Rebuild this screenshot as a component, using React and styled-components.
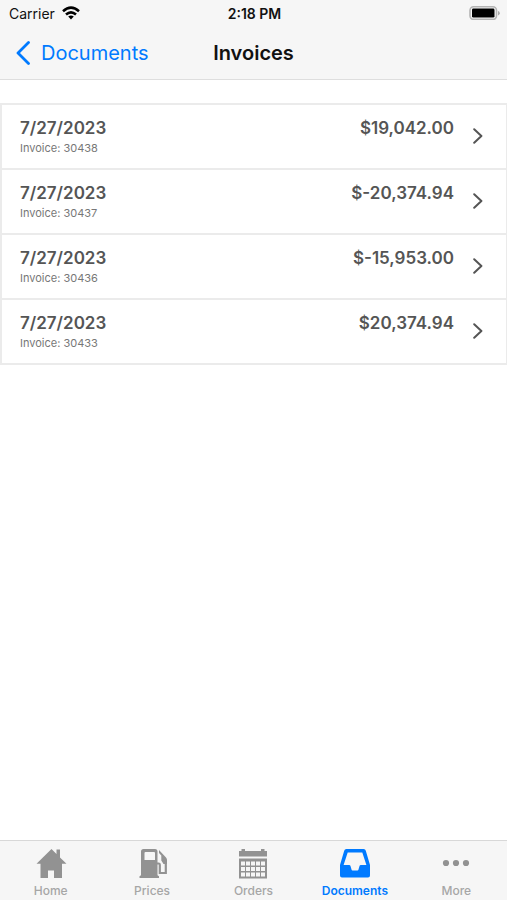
import styled, { createGlobalStyle } from 'styled-components';

const invoices = [
  { number: '30438', date: '7/27/2023', total: '$19,042.00' },
  { number: '30437', date: '7/27/2023', total: '$-20,374.94' },
  { number: '30436', date: '7/27/2023', total: '$-15,953.00' },
  { number: '30433', date: '7/27/2023', total: '$20,374.94' },
];

const tabs = [
  { label: 'Home', Icon: HomeIcon },
  { label: 'Prices', Icon: PumpIcon },
  { label: 'Orders', Icon: CalendarIcon },
  { label: 'Documents', Icon: InboxIcon, active: true },
  { label: 'More', Icon: MoreIcon },
];

function App() {
  return (
    <Screen>
      <GlobalStyle />
      <Header>
        <StatusBar>
          <Carrier>
            Carrier
            <WifiIcon />
          </Carrier>
          <Clock>2:18 PM</Clock>
          <BatterySlot>
            <BatteryIcon />
          </BatterySlot>
        </StatusBar>
        <NavBar>
          <BackButton type="button">
            <BackIcon />
            Documents
          </BackButton>
          <Title>Invoices</Title>
        </NavBar>
      </Header>
      <Content>
        <InvoiceList>
          {invoices.map((invoice) => (
            <li key={invoice.number}>
              <InvoiceRow href={`#${invoice.number}`}>
                <InvoiceInfo>
                  <Amount>{invoice.date}</Amount>
                  <InvoiceNumber>Invoice: {invoice.number}</InvoiceNumber>
                </InvoiceInfo>
                <Amount>{invoice.total}</Amount>
                <Chevron />
              </InvoiceRow>
            </li>
          ))}
        </InvoiceList>
      </Content>
      <TabBar>
        {tabs.map(({ label, Icon, active }) => (
          <Tab key={label} href={`#${label.toLowerCase()}`} $active={active}>
            <Icon />
            <TabLabel $active={active}>{label}</TabLabel>
          </Tab>
        ))}
      </TabBar>
    </Screen>
  );
}

function WifiIcon() {
  return (
    <svg width="18" height="14" viewBox="0 0 18 14" fill="none" stroke="#000" strokeWidth="2.6">
      <path d="M1 5.2Q9-1.8 17 5.2" />
      <path d="M4 8.6Q9 4.2 14 8.6" />
      <path d="M6.2 10.5Q9 8.5 11.8 10.5L9 13.6z" fill="#000" stroke="none" />
    </svg>
  );
}

function BatteryIcon() {
  return (
    <svg width="31" height="14" viewBox="0 0 31 14">
      <rect x="1" y="0.8" width="26.5" height="12.6" rx="3.6" fill="#f6f6f6" stroke="#b4b4b4" strokeWidth="1.6" />
      <rect x="3" y="2.6" width="22.5" height="9" rx="1.4" fill="#000" />
      <path d="M29 5v4.4q1.8-.6 1.8-2.2T29 5z" fill="#aaa" />
    </svg>
  );
}

function BackIcon() {
  return (
    <svg width="14" height="24" viewBox="0 0 14 24" fill="none" stroke="#007aff" strokeWidth="2.8">
      <path d="M12.5 1.5L2 12l10.5 10.5" strokeLinecap="round" strokeLinejoin="round" />
    </svg>
  );
}

function Chevron() {
  return (
    <svg width="10" height="16" viewBox="0 0 10 16" fill="none" stroke="#555" strokeWidth="2">
      <path d="M1.2 1.2L8.4 8l-7.2 6.8" strokeLinecap="round" strokeLinejoin="round" />
    </svg>
  );
}

function HomeIcon() {
  return (
    <svg width="32" height="32" viewBox="0 0 32 32" fill="currentColor">
      <path d="M16.5 1L1.5 15.8H5.5V30H13V22.5H19V30H27V15.8H31.5L25 9.5V1.5H21.5V6z" />
    </svg>
  );
}

function PumpIcon() {
  return (
    <svg width="32" height="32" viewBox="0 0 32 32" fill="currentColor">
      <path
        fillRule="evenodd"
        d="M7.5 1h11.5q2.5 0 2.5 2.5V27.2l1.5 1V30H3.5v-1.8l1.5-1V3.5Q5 1 7.5 1zM9.500 4q-1 0-1 1v7h10.500V5q0-1-1-1z"
      />
      <path d="M23 2L30 9.5q1 1 1 2.500v4h-3.500l-2.200-3.500V7.500L23 5z" />
      <path d="M21 15.500h1.600q1.200 0 1.200 1.200V25h6V13" fill="none" stroke="currentColor" strokeWidth="2.200" />
    </svg>
  );
}

function CalendarIcon() {
  const rows = [13.5, 19, 24.5];
  const columns = [4, 9, 14, 19, 24];
  return (
    <svg width="32" height="32" viewBox="0 0 32 32" fill="currentColor">
      <path d="M2 3h2.5V1H8v2h16V1h3.5v2H30v5.5H2z" />
      <path d="M2 10.5h28V30.5H2z" />
      {rows.map((y) =>
        columns.map((x) => (
          <rect key={`${x}-${y}`} x={x} y={y} width="4" height="4" fill="#f6f6f6" />
        ))
      )}
    </svg>
  );
}

function InboxIcon() {
  return (
    <svg width="32" height="32" viewBox="0 0 32 32" fill="currentColor">
      <path
        fillRule="evenodd"
        d="M7.4 1h17.2q1.8 0 2.2 1.7L31 17v10.5q0 2-2 2H3q-2 0-2-2V17L5.2 2.7Q5.6 1 7.4 1zM8.7 4.6L4.6 17h5.6q.9 0 1.2.8l1.2 4q.2.6.9.6h5q.7 0 .9-.6l1.2-4q.3-.8 1.2-.8h5.6L23.3 4.6z"
      />
    </svg>
  );
}

function MoreIcon() {
  return (
    <svg width="32" height="32" viewBox="0 0 32 32" fill="currentColor">
      <circle cx="6" cy="15" r="3.1" />
      <circle cx="16" cy="15" r="3.1" />
      <circle cx="26" cy="15" r="3.1" />
    </svg>
  );
}

const GlobalStyle = createGlobalStyle`
  * {
    box-sizing: border-box;
  }

  body {
    margin: 0;
    background-color: #fff;
    color: #111;
    font-family: Inter, 'Liberation Sans', sans-serif;
  }
`;

const Screen = styled.div`
  display: flex;
  flex-direction: column;
  min-height: 100vh;
`;

const Header = styled.header`
  background-color: #f6f6f6;
  border-bottom: 1px solid #dedede;
`;

const StatusBar = styled.div`
  display: grid;
  grid-template-columns: 1fr auto 1fr;
  align-items: center;
  height: 26px;
  padding: 0 7px 0 9px;
  font-size: 14px;
`;

const Carrier = styled.div`
  display: flex;
  align-items: center;
  gap: 7px;
`;

const Clock = styled.div`
  font-weight: 600;
`;

const BatterySlot = styled.div`
  display: flex;
  justify-content: flex-end;
`;

const NavBar = styled.div`
  display: grid;
  grid-template-columns: 1fr auto 1fr;
  align-items: center;
  height: 53px;
  padding: 0 16px;
`;

const BackButton = styled.button`
  display: flex;
  align-items: center;
  justify-self: start;
  gap: 11px;
  padding: 0;
  border: none;
  background: none;
  color: #007aff;
  font-family: inherit;
  font-size: 20px;
  cursor: pointer;
`;

const Title = styled.h1`
  margin: 0;
  font-size: 20px;
  font-weight: 600;
`;

const Content = styled.main`
  flex: 1;
  padding-top: 23px;
`;

const InvoiceList = styled.ul`
  margin: 0;
  padding: 0;
  list-style: none;
  border: 2px solid #ebebeb;
  border-width: 2px 1px 0 2px;
`;

const InvoiceRow = styled.a`
  display: flex;
  align-items: flex-start;
  gap: 19px;
  height: 65px;
  padding: 11px 23px 0 18px;
  border-bottom: 2px solid #ebebeb;
  color: #555;
  text-decoration: none;

  svg {
    align-self: center;
    margin-bottom: 12px;
  }
`;

const InvoiceInfo = styled.div`
  display: flex;
  flex: 1;
  flex-direction: column;
`;

const Amount = styled.span`
  font-size: 17px;
  font-weight: 600;
  line-height: 24px;
`;

const InvoiceNumber = styled.span`
  font-size: 11px;
  line-height: 16px;
  color: #777;
`;

const TabBar = styled.nav`
  position: sticky;
  bottom: 0;
  display: grid;
  grid-template-columns: repeat(5, 1fr);
  height: 60px;
  padding-top: 7px;
  background-color: #f6f6f6;
  border-top: 1px solid #d8d8d8;
`;

const Tab = styled.a`
  display: flex;
  flex-direction: column;
  align-items: center;
  gap: 3px;
  color: ${({ $active }) => ($active ? '#007aff' : '#929292')};
  text-decoration: none;
`;

const TabLabel = styled.span`
  font-size: 12px;
  font-weight: ${({ $active }) => ($active ? 600 : 500)};
  line-height: 16px;
  color: ${({ $active }) => ($active ? '#007aff' : '#a6a6a6')};
`;

export default App;
